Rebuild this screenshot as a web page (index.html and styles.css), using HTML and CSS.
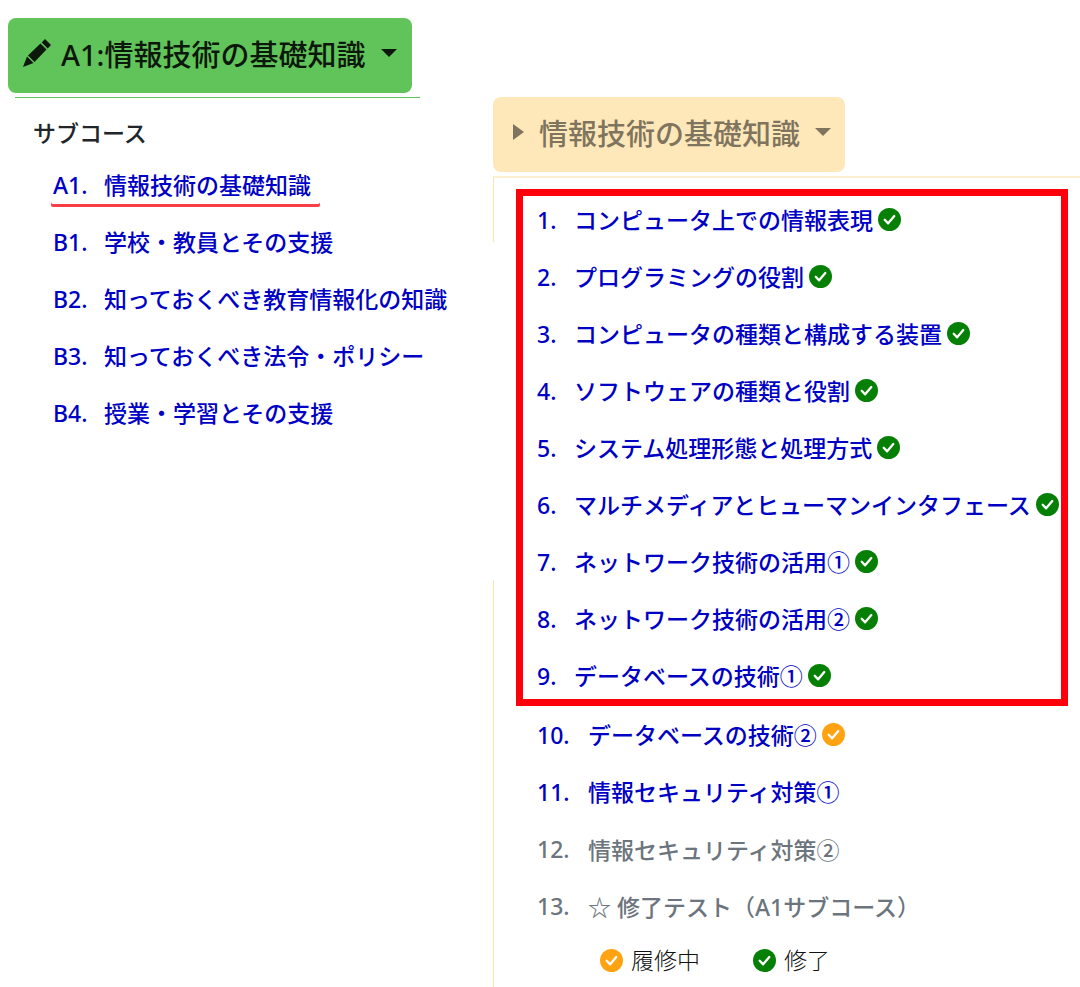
FILE: index.html
```html
<!DOCTYPE html>
<html lang="ja">
<head>
  <meta charset="UTF-8">
  <meta name="viewport" content="width=device-width, initial-scale=1.0">
  <title>情報技術の基礎知識</title>
  <link rel="stylesheet" href="styles.css">
</head>
<body>

  <svg class="defs" aria-hidden="true">
    <symbol id="check" viewBox="0 0 24 24">
      <circle cx="12" cy="12" r="12" fill="currentColor"/>
      <path d="M7 12.3l3.6 3.7 6.4-7.6" fill="none" stroke="#fff" stroke-width="2.4" stroke-linecap="round" stroke-linejoin="round"/>
    </symbol>
  </svg>

  <div class="page">
    <nav class="courses">
      <button class="tab tab-green">
        <svg class="pencil" viewBox="0 0 28 28" aria-hidden="true">
          <path d="M0 28L4 17.5L10.5 24Z"/>
          <path d="M5 16.5L17.5 4.5L23.5 10.5L11.5 23Z"/>
          <path d="M18.7 3.4L22 0L28 6L24.7 9.4Z"/>
        </svg>
        <span>A1:情報技術の基礎知識</span>
        <i class="caret"></i>
      </button>
      <div class="course-panel">
        <h2>サブコース</h2>
        <ul class="list">
          <li><a href="#a1" class="current"><span class="num wide">A1.</span>情報技術の基礎知識</a></li>
          <li><a href="#b1"><span class="num wide">B1.</span>学校・教員とその支援</a></li>
          <li><a href="#b2"><span class="num wide">B2.</span>知っておくべき教育情報化の知識</a></li>
          <li><a href="#b3"><span class="num wide">B3.</span>知っておくべき法令・ポリシー</a></li>
          <li><a href="#b4"><span class="num wide">B4.</span>授業・学習とその支援</a></li>
        </ul>
      </div>
    </nav>

    <main class="lessons">
      <button class="tab tab-yellow">
        <i class="arrow"></i>
        <span>情報技術の基礎知識</span>
        <i class="caret"></i>
      </button>
      <div class="lesson-panel">
        <ul class="list marked">
          <li><a href="#l1"><span class="num">1.</span>コンピュータ上での情報表現</a><svg class="check done"><use href="#check"/></svg></li>
          <li><a href="#l2"><span class="num">2.</span>プログラミングの役割</a><svg class="check done"><use href="#check"/></svg></li>
          <li><a href="#l3"><span class="num">3.</span>コンピュータの種類と構成する装置</a><svg class="check done"><use href="#check"/></svg></li>
          <li><a href="#l4"><span class="num">4.</span>ソフトウェアの種類と役割</a><svg class="check done"><use href="#check"/></svg></li>
          <li><a href="#l5"><span class="num">5.</span>システム処理形態と処理方式</a><svg class="check done"><use href="#check"/></svg></li>
          <li><a href="#l6"><span class="num">6.</span>マルチメディアとヒューマンインタフェース</a><svg class="check done"><use href="#check"/></svg></li>
          <li><a href="#l7"><span class="num">7.</span>ネットワーク技術の活用①</a><svg class="check done"><use href="#check"/></svg></li>
          <li><a href="#l8"><span class="num">8.</span>ネットワーク技術の活用②</a><svg class="check done"><use href="#check"/></svg></li>
          <li><a href="#l9"><span class="num">9.</span>データベースの技術①</a><svg class="check done"><use href="#check"/></svg></li>
        </ul>
        <ul class="list rest">
          <li><a href="#l10"><span class="num wide">10.</span>データベースの技術②</a><svg class="check doing"><use href="#check"/></svg></li>
          <li><a href="#l11"><span class="num wide">11.</span>情報セキュリティ対策①</a></li>
          <li class="locked"><span class="num wide">12.</span>情報セキュリティ対策②</li>
          <li class="locked"><span class="num wide">13.</span>☆ 修了テスト（A1サブコース）</li>
        </ul>
        <div class="legend">
          <span><svg class="check doing"><use href="#check"/></svg>履修中</span>
          <span><svg class="check done"><use href="#check"/></svg>修了</span>
        </div>
      </div>
    </main>
  </div>

</body>
</html>
```

FILE: styles.css
```css
:root {
  --green: #61c45a;
  --yellow: #fee8b9;
  --link: #0000c4;
  --muted: #6c757d;
}

* {
  box-sizing: border-box;
}

body {
  margin: 0;
  font-family: "Noto Sans", "Noto Sans CJK JP", sans-serif;
  font-size: 23px;
  font-weight: 500;
  background-color: #fff;
  color: #212529;
}

.defs {
  display: none;
}

.page {
  display: grid;
  grid-template-columns: 493fr 587fr;
  white-space: nowrap;
}

.courses {
  padding: 18px 0 0 8px;
}

.lessons {
  padding-top: 97px;
}

.tab {
  display: flex;
  align-items: center;
  height: 75px;
  border: none;
  border-radius: 8px;
  font: inherit;
  font-size: 29px;
  cursor: pointer;
}

.tab-green {
  gap: 10px;
  padding: 0 15px 5px;
  background-color: var(--green);
  color: #0c180b;
}

.tab-yellow {
  gap: 15px;
  padding: 0 14px 5px 20px;
  background-color: var(--yellow);
  color: #7f745d;
}

.pencil {
  width: 28px;
  height: 28px;
  fill: currentColor;
}

.caret {
  border: 8px solid transparent;
  border-top-color: currentColor;
  border-bottom: none;
}

.tab-green .caret {
  margin-left: 6px;
}

.arrow {
  border: 8px solid transparent;
  border-left: 11px solid currentColor;
  border-right: none;
}

.course-panel {
  width: 405px;
  margin: 4px 0 0 7px;
  padding: 17px 18px;
  border-top: 1px solid var(--green);
}

h2 {
  margin: 0;
  font-size: 23px;
  font-weight: 500;
  line-height: 36px;
}

.list {
  margin: 0;
  padding: 0;
  list-style: none;
}

.course-panel .list {
  margin: 5px 0 0 20px;
}

.list li {
  display: flex;
  align-items: center;
  gap: 5px;
  height: 57px;
}

a {
  display: flex;
  color: var(--link);
  line-height: 38px;
  text-decoration: none;
}

.current {
  margin: 0 -9px 0 -2px;
  padding: 0 9px 0 2px;
  border-radius: 2px;
  box-shadow: 0 3px 0 #f93e48;
}

.num {
  flex: none;
  width: 37px;
}

.num.wide {
  width: 51px;
}

.locked .num.wide {
  width: 46px;
}

.locked {
  color: var(--muted);
}

/* left rule fades out in the middle of the panel */
.lesson-panel {
  margin-top: 4px;
  padding: 13px 14px 9px 25px;
  border-top: 2px solid #fdf0cf;
  background: linear-gradient(#fde4ae 64px, transparent 64px 402px, #fde4ae 402px) left / 1px 100% no-repeat;
}

.marked {
  padding-left: 19px;
  outline: 7px solid #fe000c;
  outline-offset: -5px;
}

.rest {
  margin-top: 2px;
  padding-left: 19px;
}

.check {
  flex: none;
  width: 23px;
  height: 23px;
}

.done {
  color: #058005;
}

.doing {
  color: #ffa312;
}

.legend {
  display: flex;
  gap: 53px;
  margin-top: 8px;
  padding-left: 82px;
  color: #111;
  font-weight: 300;
  line-height: 36px;
}

.legend span {
  display: flex;
  align-items: center;
  gap: 8px;
}
```
